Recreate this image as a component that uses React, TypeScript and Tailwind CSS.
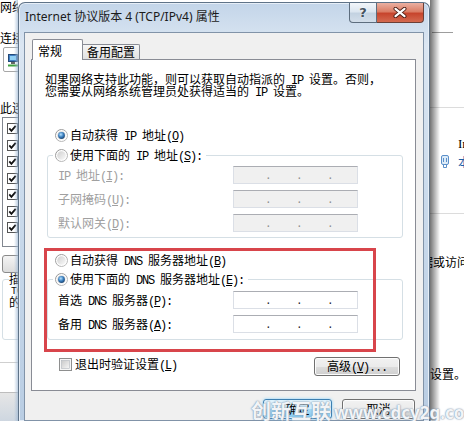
const zh = "font-['Noto_Sans_CJK_SC',sans-serif] text-[12px]"
const en = "font-['Liberation_Mono',monospace] text-[12px] tracking-[-1.2px] whitespace-pre"

// SimSun-like run split: latin half width, CJK full width
const T = ({ s }: { s: string }) => {
  const parts = s.match(/[\x00-\x7f]+|[^\x00-\x7f]+/g) ?? []
  return (
    <>
      {parts.map((p, i) => (
        <span key={i} className={p.charCodeAt(0) < 128 ? en : zh}>
          {p}
        </span>
      ))}
    </>
  )
}

const Acc = ({ t, k, tail = '' }: { t: string; k: string; tail?: string }) => (
  <span className="whitespace-nowrap">
    <T s={t + '('} />
    <span className={`${en} underline underline-offset-[1px]`}>{k}</span>
    <T s={')' + tail} />
  </span>
)

const Radio = ({ on }: { on?: boolean }) => (
  <svg width="13" height="13" viewBox="0 0 13 13" className="shrink-0">
    <defs>
      <linearGradient id="rring" x1="0" y1="0" x2="1" y2="1">
        <stop offset="0" stopColor="#8f8f8f" />
        <stop offset="1" stopColor="#c4c4c4" />
      </linearGradient>
      <linearGradient id="rfill" x1="0" y1="0" x2="1" y2="1">
        <stop offset="0" stopColor="#cfcfcf" />
        <stop offset="1" stopColor="#fafafa" />
      </linearGradient>
      <radialGradient id="rdot" cx="0.4" cy="0.35" r="0.75">
        <stop offset="0" stopColor="#b9e4ff" />
        <stop offset="0.5" stopColor="#3a7fc0" />
        <stop offset="1" stopColor="#15365c" />
      </radialGradient>
    </defs>
    <circle cx="6.5" cy="6.5" r="6" fill="#fdfdfd" stroke="url(#rring)" />
    <circle cx="6.5" cy="6.5" r="4.3" fill="url(#rfill)" />
    {on && <circle cx="6.5" cy="6.5" r="3.4" fill="url(#rdot)" />}
  </svg>
)

const Check = () => (
  <svg width="13" height="13" viewBox="0 0 13 13" className="shrink-0">
    <defs>
      <linearGradient id="cfill" x1="0" y1="0" x2="1" y2="1">
        <stop offset="0" stopColor="#c9c9c9" />
        <stop offset="1" stopColor="#f7f7f7" />
      </linearGradient>
    </defs>
    <rect x="0.5" y="0.5" width="12" height="12" fill="#f6f6f6" stroke="#8e8f8f" />
    <rect x="2.5" y="2.5" width="8" height="8" fill="url(#cfill)" stroke="#b3b8be" strokeWidth="0.6" />
  </svg>
)

const Tick = () => (
  <svg width="11" height="11" viewBox="0 0 11 11" className="shrink-0">
    <rect x="0.5" y="0.5" width="10" height="10" fill="#fff" stroke="#555" />
    <path d="M2.3 5.4 4.4 7.8 8.7 2.8" fill="none" stroke="#111" strokeWidth="1.8" />
  </svg>
)

const IpBox = ({ off }: { off?: boolean }) => (
  <div
    className={`flex h-[18px] w-[125px] shrink-0 items-center gap-[25px] border border-[#dbdfe6] border-t-[#abadb3] pl-[31px] pt-[2px] font-['Liberation_Mono',monospace] text-[11px] leading-[12px] ${
      off ? 'bg-[#f0f0f0] text-[#8c8c8c]' : 'bg-white text-[#222]'
    }`}
  >
    <span className="w-[6px] text-center">.</span>
    <span className="w-[6px] text-center">.</span>
    <span className="w-[6px] text-center">.</span>
  </div>
)

const btnBase = 'flex items-center justify-center rounded-[3px] border leading-[12px]'
const btnGrey =
  'border-[#707070] bg-[linear-gradient(180deg,#f2f2f2_0%,#ebebeb_50%,#dddddd_50%,#cfcfcf_100%)] shadow-[inset_0_0_0_1px_#fcfcfc]'
const btnBlue =
  'border-[#3c7fb1] bg-[linear-gradient(180deg,#e9f6fd_0%,#cdeefc_50%,#a6dbf6_50%,#86c9ee_100%)] shadow-[inset_0_0_0_1px_#dff3fd,0_0_3px_#7fd0ff]'

const Row = ({ children }: { children: React.ReactNode }) => (
  <div className="flex h-[18px] items-center">{children}</div>
)

const LeftBg = () => (
  <div className={`relative w-[18px] shrink-0 overflow-hidden bg-white leading-[12px] ${zh}`}>
    <div className="whitespace-nowrap pt-[1px]">网络连接</div>
    <div className="mt-[19px] whitespace-nowrap">连接时</div>
    <div className="ml-[3px] mt-[3px] flex h-[25px] w-[30px] items-center rounded-[2px] border border-[#a7a7a7] bg-white pl-[3px]">
      <svg width="12" height="14" viewBox="0 0 12 14">
        <rect x="1.5" y="1.5" width="9" height="7" fill="#3f7fc4" stroke="#244a78" />
        <rect x="3" y="3" width="6" height="4" fill="#8fd0f5" />
        <rect x="4" y="9" width="4" height="2" fill="#666" />
        <path d="M1 12.5h10" stroke="#3fa03f" strokeWidth="2" />
      </svg>
    </div>
    <div className="mt-[30px] whitespace-nowrap">此连接使用</div>
    <div className="ml-[2px] mt-[3px] flex h-[130px] w-[40px] flex-col gap-[5.5px] border border-[#828790] pl-[4px] pt-[5px]">
      {[0, 1, 2, 3, 4, 5, 6].map((i) => (
        <Tick key={i} />
      ))}
    </div>
    <div className="ml-[2px] mt-[8px] h-[18px] w-[40px] rounded-[3px] border border-[#8a8a8a] bg-[linear-gradient(180deg,#f4f4f4,#dcdcdc)]" />
    <fieldset className="ml-[2px] h-[67px] w-[40px] rounded-[3px] border border-[#d5dfe5] pl-[6px]">
      <legend className="leading-[12px]">描述</legend>
      <div className="pl-[2px] pt-[2px] font-['Liberation_Mono',monospace] text-[10px] leading-[9px]">TCP</div>
      <div className="leading-[12px]">的协</div>
    </fieldset>
    <div className="mt-[22px] h-[30px] border-t border-[#cfcfcf]" />
    <div className="h-[30px] border-t border-[#bdbdbd] bg-[linear-gradient(180deg,#e6e6e6,#cdd6e0)]" />
    <div className="absolute inset-y-0 right-0 w-[4px] bg-[linear-gradient(90deg,rgba(160,185,212,0),rgba(160,185,212,0.7))]" />
  </div>
)

const RightBg = () => (
  <div className={`relative flex-1 overflow-hidden bg-white leading-[12px] ${zh}`}>
    <div className="ml-[2px] mt-[32px] h-px w-[21px] bg-[#9d9d9d]" />
    <div className="mt-[74px] h-px bg-[#dcdcdc]" />
    <div className="ml-[28px] mt-[30px] whitespace-nowrap font-['Liberation_Serif',serif] text-[13px]">Internet</div>
    <div className="ml-[11px] mt-[5px] flex items-center gap-[9px] whitespace-nowrap text-[#1f5fa8]">
      <svg width="8" height="13" viewBox="0 0 8 13" className="shrink-0">
        <rect x="0.5" y="0.5" width="7" height="9" rx="1.5" fill="#dcebf8" stroke="#5b8fc9" />
        <path d="M2.5 3v4M5.5 3v4M2.5 10v2.5h3V10" fill="none" stroke="#5b8fc9" />
      </svg>
      <span>本地</span>
    </div>
    <div className="mt-[45px] h-px bg-[#dcdcdc]" />
    <div className="-ml-[9px] mt-[42px] whitespace-nowrap">据或访问</div>
    <div className="mt-[100px] whitespace-nowrap">设置。</div>
    <div className="absolute inset-y-0 left-0 w-[10px] bg-[linear-gradient(90deg,rgba(0,0,0,0.55),rgba(0,0,0,0))]" />
  </div>
)

const Dialog = () => (
  <div className="mt-[2px] flex w-[412px] shrink-0 flex-col rounded-t-[7px] border border-b-0 border-[#5f7388] bg-[linear-gradient(180deg,#c3d5e9_0%,#dbe6f2_10%,#cbdbec_45%,#b9cde3_100%)] shadow-[inset_0_0_0_1px_#e6eef7]">
    <div className="flex h-[29px] shrink-0 items-start justify-between">
      <div className="whitespace-nowrap pl-[6px] pt-[7px] font-['Noto_Sans','Noto_Sans_CJK_SC',sans-serif] text-[12px] leading-[14px] text-[#1b1b1b]">
        Internet 协议版本 4 (TCP/IPv4) 属性
      </div>
      <div className="mr-[5px] flex">
        <div className="flex h-[20px] w-[28px] items-center justify-center rounded-bl-[4px] border border-t-0 border-[#5d6d7e] bg-[linear-gradient(180deg,#f2f6fa_0%,#dce6f0_45%,#c3d2e1_55%,#d3deea_100%)] font-['DejaVu_Sans',sans-serif] text-[13px] font-bold text-[#46535f] [text-shadow:0_0_2px_#fff]">
          ?
        </div>
        <div className="flex h-[20px] w-[47px] items-center justify-center rounded-br-[4px] border border-l-0 border-t-0 border-[#6b3f37] bg-[linear-gradient(180deg,#eab0a2_0%,#db7e66_45%,#c7452d_55%,#d46a50_100%)]">
          <svg width="14" height="11" viewBox="0 0 14 11">
            <path d="M2.5 1.8 11.5 9.2M11.5 1.8 2.5 9.2" stroke="#4a1d14" strokeWidth="4" strokeLinecap="round" />
            <path d="M2.5 1.8 11.5 9.2M11.5 1.8 2.5 9.2" stroke="#fff" strokeWidth="2.2" strokeLinecap="round" />
          </svg>
        </div>
      </div>
    </div>

    <div className="mx-[5px] flex flex-1 flex-col border border-[#8193a8] bg-[#f0f0f0] pl-[6px] pr-[7px] pt-[6px] text-black">
      <div className="relative z-10 -mb-px flex h-[21px] items-end pl-[1px] leading-[12px]">
        <div className="h-[21px] w-[51px] rounded-t-[2px] border border-b-0 border-[#898c95] bg-white pl-[5px] pt-[4px]">
          <T s="常规" />
        </div>
        <div className="mb-px flex h-[15px] w-[57px] items-center rounded-tr-[2px] border border-b-0 border-l-0 border-[#898c95] bg-[linear-gradient(180deg,#f6f6f6,#e1e1e1)] pl-[4px]">
          <T s="备用配置" />
        </div>
      </div>

      <div className="flex h-[332px] flex-col border border-[#898c95] bg-white pl-[13px] pr-[12px] pt-[12px] leading-[12px]">
        <div className="h-[12px] whitespace-nowrap">
          <T s="如果网络支持此功能，则可以获取自动指派的 IP 设置。否则，" />
        </div>
        <div className="h-[12px] whitespace-nowrap">
          <T s="您需要从网络系统管理员处获得适当的 IP 设置。" />
        </div>

        <div className="ml-[10px] mt-[32px] flex h-[14px] items-center gap-[2px]">
          <Radio on />
          <Acc t="自动获得 IP 地址" k="O" />
        </div>

        <fieldset className="ml-[2px] mt-[6px] rounded-[3px] border border-[#d5dfe5] pb-[5px] pl-[5px]">
          <legend className="pl-[2px] pr-[4px]">
            <div className="flex h-[14px] items-center gap-[2px]">
              <Radio />
              <Acc t="使用下面的 IP 地址" k="S" tail=":" />
            </div>
          </legend>
          <div className="flex flex-col gap-[6px] pl-[5px] pt-[4px] text-[#a0a0a0]">
            <Row>
              <div className="w-[175px]">
                <Acc t="IP 地址" k="I" tail=":" />
              </div>
              <IpBox off />
            </Row>
            <Row>
              <div className="w-[175px]">
                <Acc t="子网掩码" k="U" tail=":" />
              </div>
              <IpBox off />
            </Row>
            <Row>
              <div className="w-[175px]">
                <Acc t="默认网关" k="D" tail=":" />
              </div>
              <IpBox off />
            </Row>
          </div>
        </fieldset>

        <div className="relative mt-[15px]">
          <div className="ml-[10px] flex h-[14px] items-center gap-[2px]">
            <Radio />
            <Acc t="自动获得 DNS 服务器地址" k="B" />
          </div>
          <fieldset className="ml-[2px] mt-[5px] rounded-[3px] border border-[#d5dfe5] pb-[6px] pl-[5px]">
            <legend className="pl-[2px] pr-[4px]">
              <div className="flex h-[14px] items-center gap-[2px]">
                <Radio on />
                <Acc t="使用下面的 DNS 服务器地址" k="E" tail=":" />
              </div>
            </legend>
            <div className="flex flex-col gap-[6px] pl-[5px] pt-[5px]">
              <Row>
                <div className="w-[175px]">
                  <Acc t="首选 DNS 服务器" k="P" tail=":" />
                </div>
                <IpBox />
              </Row>
              <Row>
                <div className="w-[175px]">
                  <Acc t="备用 DNS 服务器" k="A" tail=":" />
                </div>
                <IpBox />
              </Row>
            </div>
          </fieldset>
          <div className="pointer-events-none absolute -left-[1px] -top-[5px] h-[104px] w-[332px] border-[3px] border-[#d8454b]" />
        </div>

        <div className="mt-[17px] flex items-start justify-between pr-[3px]">
          <div className="ml-[14px] flex h-[14px] items-center gap-[3px]">
            <Check />
            <Acc t="退出时验证设置" k="L" />
          </div>
          <div className={`${btnBase} ${btnGrey} h-[19px] w-[86px]`}>
            <Acc t="高级" k="V" tail="..." />
          </div>
        </div>
      </div>

      <div className="mt-[8px] flex justify-end gap-[10px] pr-[1px]">
        <div className={`${btnBase} ${btnBlue} h-[20px] w-[69px]`}>
          <T s="确定" />
        </div>
        <div className={`${btnBase} ${btnGrey} h-[20px] w-[73px]`}>
          <T s="取消" />
        </div>
      </div>
    </div>
  </div>
)

export default function App() {
  return (
    <div className="relative flex h-[421px] w-[464px] overflow-hidden bg-white text-black">
      <LeftBg />
      <Dialog />
      <RightBg />
      <div className="pointer-events-none absolute left-[251px] top-[396px] whitespace-nowrap font-bold text-white/90 [text-shadow:0_0_2px_#7d93ab,0_0_1px_#7d93ab]">
        <span className="font-['Noto_Sans_CJK_SC',sans-serif] text-[20px]">创新互联</span>
        <span className="ml-[3px] font-['Noto_Sans',sans-serif] text-[17px]">www.cdcy2g.com</span>
      </div>
    </div>
  )
}
